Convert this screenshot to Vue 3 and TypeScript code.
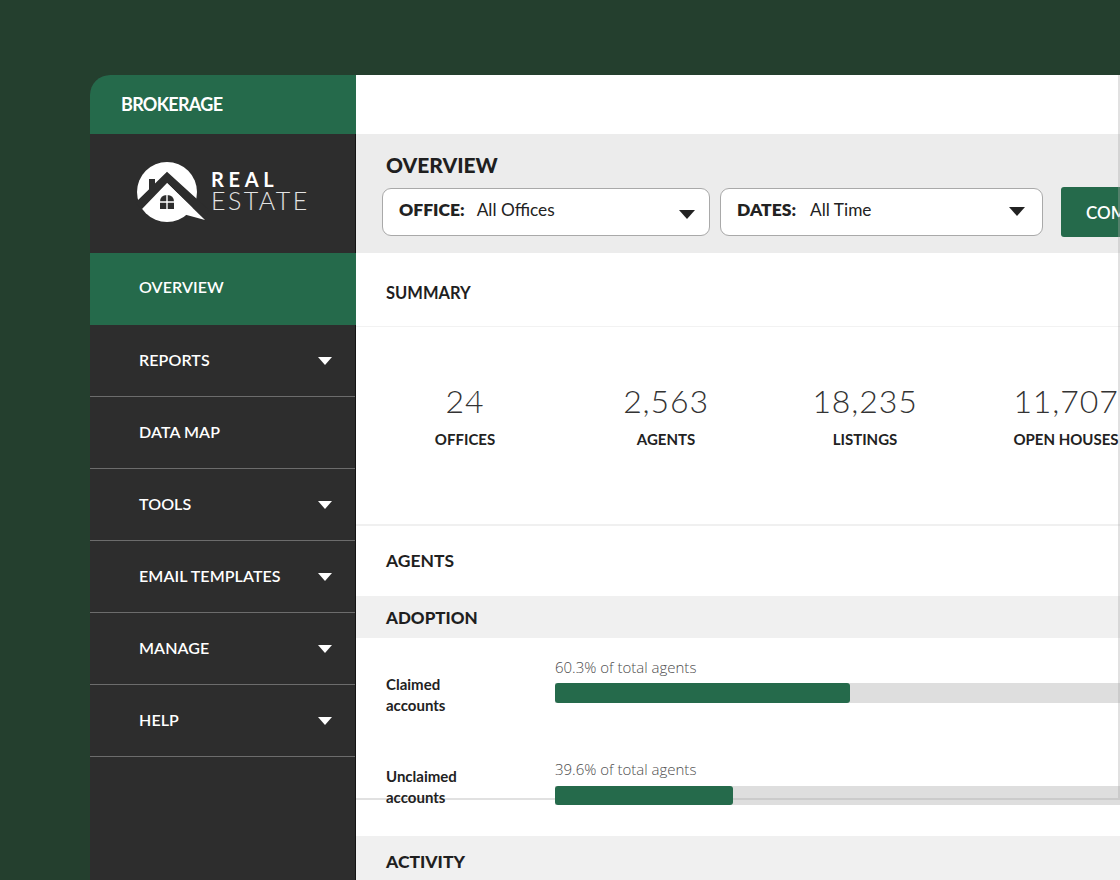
<script setup lang="ts">
interface NavItem { label: string; caret: boolean; active?: boolean }
const nav: NavItem[] = [
  { label: 'OVERVIEW', caret: false, active: true },
  { label: 'REPORTS', caret: true },
  { label: 'DATA MAP', caret: false },
  { label: 'TOOLS', caret: true },
  { label: 'EMAIL TEMPLATES', caret: true },
  { label: 'MANAGE', caret: true },
  { label: 'HELP', caret: true },
]
const stats = [
  { value: '24', label: 'OFFICES', cls: 's1' },
  { value: '2,563', label: 'AGENTS', cls: 's2' },
  { value: '18,235', label: 'LISTINGS', cls: 's3' },
  { value: '11,707', label: 'OPEN HOUSES', cls: 's4' },
]
const bars = [
  { name: ['Claimed', 'accounts'], note: '60.3% of total agents', width: 295, cls: 'first' },
  { name: ['Unclaimed', 'accounts'], note: '39.6% of total agents', width: 178, cls: 'second' },
]
</script>

<template>
  <div class="page">
    <div class="frame">
      <aside class="side">
        <div class="brand">BROKERAGE</div>
        <div class="side-body">
          <div class="logo">
            <svg class="mark" width="70" height="62" viewBox="0 0 70 62">
              <circle cx="30" cy="30" r="30" fill="#fff" />
              <path d="M30 9.7 L-2 41 L5 47 L30 21 L68 58 L72 48 Z" fill="#2d2d2d" />
              <path d="M30 21 L68 58 L46 52 L30 40 Z" fill="#fff" />
              <rect x="12" y="17" width="6" height="12" fill="#2d2d2d" />
              <path d="M23 40 Q23 33 30 33 Q37 33 37 40 V47 H23 Z" fill="#2d2d2d" />
              <path d="M30 32 V48 M22 40 H38" stroke="#fff" stroke-width="1.4" />
            </svg>
            <div class="word">
              <div class="real">REAL</div>
              <div class="estate">ESTATE</div>
            </div>
          </div>
          <nav>
            <div v-for="item in nav" :key="item.label" class="nav-item" :class="{ active: item.active }">
              <span>{{ item.label }}</span>
              <i v-if="item.caret" class="caret"></i>
            </div>
          </nav>
        </div>
      </aside>
      <main class="main">
        <div class="top"></div>
        <section class="filters">
          <h1>OVERVIEW</h1>
          <div class="controls">
            <div class="select office"><b>OFFICE:</b><span>All Offices</span><i class="arrow"></i></div>
            <div class="select dates"><b>DATES:</b><span>All Time</span><i class="arrow"></i></div>
            <button class="compare">COMPARE</button>
          </div>
        </section>
        <div class="head summary">SUMMARY</div>
        <section class="stats">
          <div v-for="s in stats" :key="s.label" class="stat" :class="s.cls">
            <div class="num">{{ s.value }}</div>
            <div class="lab">{{ s.label }}</div>
          </div>
        </section>
        <div class="head agents">AGENTS</div>
        <div class="band adoption">ADOPTION</div>
        <section class="bars">
          <div v-for="b in bars" :key="b.note" class="row">
            <div class="name" :class="b.cls">{{ b.name[0] }}<br />{{ b.name[1] }}</div>
            <div class="meter" :class="b.cls">
              <div class="note">{{ b.note }}</div>
              <div class="track"><div class="fill" :style="{ width: b.width + 'px' }"></div></div>
            </div>
          </div>
        </section>
        <div class="band activity">ACTIVITY</div>
        <div class="seam"></div>
      </main>
    </div>
  </div>
</template>

<style>
html, body { margin: 0; background: #243f2e; overflow: hidden; }
</style>

<style scoped>
.page {
  width: 1120px;
  height: 880px;
  overflow: hidden;
  background: #243f2e;
  padding-top: 75px;
  padding-left: 90px;
  box-sizing: border-box;
  font-family: Lato, "Liberation Sans", sans-serif;
}
.frame { display: flex; width: 1100px; height: 805px; }
.side { width: 266px; flex: none; background: #2d2d2d; border-top-left-radius: 20px; overflow: hidden; display: flex; flex-direction: column; }
.brand {
  height: 59px;
  flex: none;
  background: #256a4b;
  color: #fff;
  font-weight: 700;
  font-size: 18px;
  letter-spacing: -0.7px;
  line-height: 59px;
  padding-left: 31px;
}
.side-body { flex: 1; border-right: 1px solid #141414; }
.logo { height: 119px; display: flex; padding: 28px 0 0 47px; box-sizing: border-box; gap: 4px; }
.mark { flex: none; overflow: visible; }
.word { color: #fff; line-height: 1; }
.real { font-weight: 700; font-size: 20px; letter-spacing: 4.7px; height: 20px; margin-top: 7px; }
.estate { font-weight: 300; font-size: 25px; line-height: 23px; letter-spacing: 2.4px; color: #e4e4e4; }
.nav-item {
  height: 72px;
  box-sizing: border-box;
  border-bottom: 1px solid #6c6c6c;
  color: #fff;
  font-size: 16px;
  font-weight: 600;
  letter-spacing: 0.1px;
  display: flex;
  align-items: center;
  justify-content: space-between;
  padding: 0 23px 2px 49px;
}
.nav-item.active { background: #256a4b; border-bottom: 0; padding-bottom: 6px; margin-right: -1px; }
.caret { width: 0; height: 0; margin-top: 2px; border-left: 7.5px solid transparent; border-right: 7.5px solid transparent; border-top: 8px solid #fff; }
.main { flex: 1; background: #fff; min-width: 0; overflow: hidden; position: relative; }
.top { height: 59px; background: #fff; }
.filters { height: 119px; background: #ececec; padding: 18px 0 0 30px; box-sizing: border-box; }
h1 { margin: 0; font-size: 21px; font-weight: 900; line-height: 26px; color: #1f1f1f; }
.controls { display: flex; margin: 10px 0 0 -4px; gap: 10px; align-items: flex-start; }
.select {
  height: 48px;
  background: #fff;
  border: 1px solid #a9a9a9;
  border-radius: 9px;
  box-sizing: border-box;
  display: flex;
  align-items: center;
  padding: 0 0 6px 16px;
  position: relative;
  font-size: 17.3px;
  color: #222;
}
.select b { font-weight: 800; font-size: 17.5px; margin-right: 12px; }
.office { width: 328px; }
.dates { width: 323px; }
.dates b { margin-right: 14px; }
.arrow {
  position: absolute;
  width: 0;
  height: 0;
  border-left: 8px solid transparent;
  border-right: 8px solid transparent;
  border-top: 9px solid #222;
}
.office .arrow { right: 14px; top: 21px; }
.dates .arrow { right: 17px; top: 18px; }
.compare {
  margin-left: 8px;
  height: 50px;
  margin-top: -1px;
  width: 120px;
  flex: none;
  border: 0;
  border-radius: 3px;
  background: #256a4b;
  color: #fff;
  font: 600 17px Lato, sans-serif;
  text-align: left;
  padding-left: 25px;
}
.head { padding-left: 30px; color: #1f1f1f; font-weight: 700; box-sizing: border-box; display: flex; align-items: center; }
.summary { height: 74px; padding-top: 6px; font-size: 16.5px; border-bottom: 1px solid #f2f2f2; }
.stats { height: 199px; position: relative; border-bottom: 2px solid #f0f0f0; box-sizing: border-box; }
.stat { position: absolute; transform: translateX(-50%); text-align: center; white-space: nowrap; top: 53px; }
.s1 { left: 109px; } .s2 { left: 310px; } .s3 { left: 509px; } .s4 { left: 710px; }
.num { font-size: 32px; font-weight: 300; line-height: 42px; color: #333; letter-spacing: 0.9px; }
.lab { font-size: 15px; font-weight: 700; color: #222; line-height: 20px; margin-top: 7px; }
.agents { height: 70px; padding-bottom: 2px; font-size: 17.5px; }
.band { background: #f0f0f0; padding-left: 30px; color: #1f1f1f; font-weight: 900; font-size: 17px; display: flex; align-items: center; }
.adoption { height: 42px; }
.bars { height: 198px; position: relative; padding-top: 18px; box-sizing: border-box; }
.row { display: flex; height: 102px; }
.name { position: relative; z-index: 2; flex: none; padding-left: 30px; width: 138px; font-size: 15px; line-height: 20.5px; font-weight: 700; color: #222; margin-right: 31px; }
.name.first { padding-top: 18px; }
.name.second { padding-top: 8px; }
.meter { flex: 1; padding-top: 1px; }
.note { font-family: "Open Sans", sans-serif; font-weight: 300; font-size: 15px; line-height: 20px; color: #4d4d4d; }
.track { margin-top: 6px; height: 20px; background: #dedede; }
.meter.second .track { margin-top: 7px; height: 19px; }
.fill { position: relative; z-index: 2; height: 100%; background: #256a4b; border-radius: 3px; }
.seam { position: absolute; z-index: 1; left: 0; top: 0; width: 762px; height: 723px; border-right: 2px solid rgba(170,170,170,.35); border-bottom: 2px solid rgba(170,170,170,.35); pointer-events: none; }
.activity { height: 44px; font-size: 17.5px; padding-top: 15px; box-sizing: border-box; align-items: flex-start; }
</style>
